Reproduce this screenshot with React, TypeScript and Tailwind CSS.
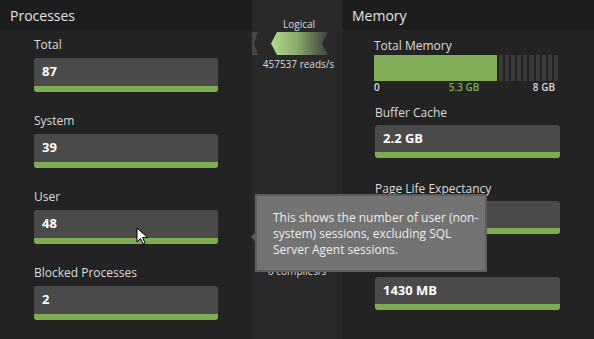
import React from 'react';

type FieldProps = { label: string; value: string; tight?: boolean };

function Field({ label, value, tight }: FieldProps) {
  return (
    <div className="flex flex-col">
      <div className="text-[12px] leading-[16px] text-[#dcdcdc]">{label}</div>
      <div
        className={
          tight
            ? 'mt-[4px] flex h-[33px] w-[185px] flex-col overflow-hidden rounded-[3px] bg-[#4b4a4a]'
            : 'mt-[5px] flex h-[34px] w-[184px] flex-col overflow-hidden rounded-[3px] bg-[#4b4a4a]'
        }
      >
        <div className="flex flex-1 items-center pl-[8px] text-[13px] font-bold text-white">{value}</div>
        <div className="h-[6px] bg-[#7fad52]" />
      </div>
    </div>
  );
}

function Header({ title }: { title: string }) {
  return (
    <div className="flex h-[30px] items-center bg-[#1d1d1d] pl-[10px] text-[14px] text-[#e4e4e4]">{title}</div>
  );
}

export default function App() {
  const stripes = Array.from({ length: 10 });

  return (
    <div className="relative flex h-[339px] w-[594px] overflow-hidden bg-[#232323] font-['Open_Sans',sans-serif]">
      {/* processes */}
      <div className="flex w-[252px] flex-col bg-[#232323]">
        <Header title="Processes" />
        <div className="flex flex-col gap-[21px] pl-[34px] pt-[7px]">
          <Field label="Total" value="87" />
          <Field label="System" value="39" />
          <Field label="User" value="48" />
          <Field label="Blocked Processes" value="2" />
        </div>
      </div>

      {/* flow column */}
      <div className="relative flex w-[90px] flex-col bg-[#292929]">
        <div className="pt-[18px] text-center text-[10px] leading-[12px] text-[#dcdcdc]">
          <span className="ml-[4px]">Logical</span>
        </div>
        <svg width="90" height="23" viewBox="0 0 90 23" className="mt-[2px]">
          <defs>
            <linearGradient id="flow" x1="0" y1="0" x2="1" y2="0">
              <stop offset="0" stopColor="#b2da8e" />
              <stop offset="0.45" stopColor="#89ad6c" />
              <stop offset="1" stopColor="#3e3e3e" />
            </linearGradient>
          </defs>
          <polygon points="0,0 6,0 2,11.5 6,23 0,23" fill="#474747" />
          <polygon points="19,11.5 25,0 76,0 70,11.5 76,23 25,23" fill="url(#flow)" />
        </svg>
        <div className="mt-[3px] text-center text-[10px] leading-[12px] text-[#dcdcdc]">
          <span className="ml-[3px]">457537 reads/s</span>
        </div>
        <div className="mt-auto mb-[62px] pl-[16px] text-[10px] leading-[12px] text-[#dcdcdc]">0 compiles/s</div>
      </div>

      {/* memory */}
      <div className="flex flex-1 flex-col bg-[#232323]">
        <Header title="Memory" />
        <div className="flex flex-col pl-[32px] pt-[8px]">
          <div className="text-[12px] leading-[16px] text-[#dcdcdc]">Total Memory</div>
          <div className="mt-[1px] flex h-[26px] w-[184px]">
            <div className="w-[123px] bg-[#80ad55]" />
            <div className="ml-[2px] flex flex-1 gap-[2px]">
              {stripes.map((_, i) => (
                <div key={i} className="flex-1 bg-[#3a3a3a]" />
              ))}
            </div>
          </div>
          <div className="flex w-[184px] text-[10px] font-semibold leading-[13px] text-[#dcdcdc]">
            <span>0</span>
            <span className="ml-[69px] text-[#80ad55]">5.3 GB</span>
            <span className="ml-auto pr-[3px]">8 GB</span>
          </div>
          <div className="flex flex-col gap-[23px] pl-[1px] pt-[11px]">
            <Field tight label="Buffer Cache" value="2.2 GB" />
            <Field tight label="Page Life Expectancy" value="1846 s" />
            <Field tight label="Database Cache" value="1430 MB" />
          </div>
        </div>
      </div>

      {/* tooltip */}
      <div className="absolute left-[255px] top-[194px] h-[78px] w-[232px] border-2 border-[#5d5d5d] bg-[#737373] pl-[16px] pt-[14px] text-[12px] leading-[16px] text-[#ededed]">
        This shows the number of user (non-
        <br />
        system) sessions, excluding SQL
        <br />
        Server Agent sessions.
        <div className="absolute left-[-6px] top-[37px] h-0 w-0 border-y-[4px] border-r-[4px] border-y-transparent border-r-[#5d5d5d]" />
      </div>

      {/* mouse pointer */}
      <svg className="absolute left-[136px] top-[227px]" width="13" height="19" viewBox="0 0 13 19">
        <path d="M1 1 L1 15 L4.5 11.5 L7 17 L9 16 L6.6 10.6 L11.5 10.6 Z" fill="#ffffff" stroke="#000000" strokeWidth="1" strokeLinejoin="round" />
      </svg>
    </div>
  );
}
